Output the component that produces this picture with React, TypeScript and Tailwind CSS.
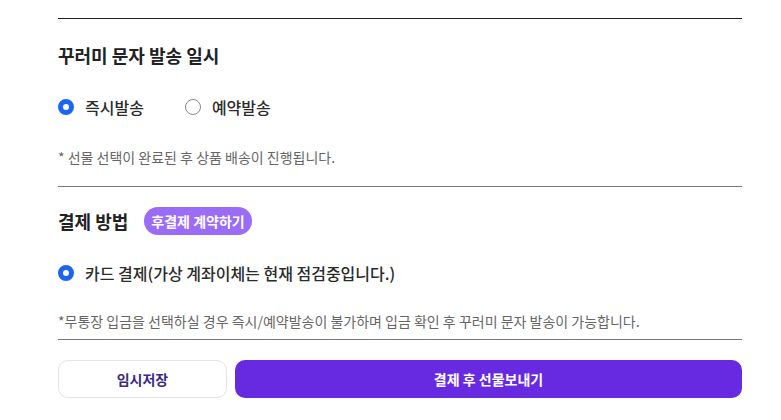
import { ReactNode } from 'react';

const FONT = { fontFamily: '"Noto Sans CJK KR", "Noto Sans", sans-serif' };

function Radio({ checked, label }: { checked?: boolean; label: string }) {
    return (
        <label className="flex items-center gap-[11px] h-6">
            {checked ? (
                <span className="w-4 h-4 rounded-full border-[5px] border-[#1c64f2] bg-white box-border" />
            ) : (
                <span className="w-4 h-4 rounded-full border border-[#8a8a8a] bg-white box-border" />
            )}
            <span className="text-[16px] font-medium text-[#2b2b2b] leading-6">{label}</span>
        </label>
    );
}

function Title({ children }: { children: ReactNode }) {
    return <h3 className="text-[18px] font-bold text-[#222] leading-6">{children}</h3>;
}

export default function App() {
    return (
        <div className="min-h-screen bg-white" style={FONT}>
            <div className="ml-[58px] w-[684px] pt-[18px] flex flex-col">
                <div className="h-px bg-[#222]" />

                {/* 발송 일시 */}
                <div className="mt-[24px]">
                    <Title>꾸러미 문자 발송 일시</Title>
                </div>
                <div className="mt-[28px] flex items-center gap-[41px]">
                    <Radio checked label="즉시발송" />
                    <Radio label="예약발송" />
                </div>
                <p className="mt-[28px] text-[14px] leading-5 text-[#666]">
                    * 선물 선택이 완료된 후 상품 배송이 진행됩니다.
                </p>
                <div className="mt-[19px] h-px bg-[#777]" />

                {/* 결제 방법 */}
                <div className="mt-[20px] flex items-center gap-4 h-7">
                    <Title>결제 방법</Title>
                    <span className="h-7 px-[7px] rounded-full bg-[#9b6cf6] text-white text-[14px] font-bold flex items-center">
                        후결제 계약하기
                    </span>
                </div>
                <div className="mt-[26px]">
                    <Radio checked label="카드 결제(가상 계좌이체는 현재 점검중입니다.)" />
                </div>
                <p className="mt-[26px] text-[14px] leading-5 text-[#666]">
                    *무통장 입금을 선택하실 경우 즉시/예약발송이 불가하며 입금 확인 후 꾸러미 문자 발송이 가능합니다.
                </p>
                <div className="mt-[8px] h-px bg-[#777]" />

                <div className="mt-[20px] flex gap-2">
                    <button className="w-[169px] h-[38px] rounded-[10px] border border-[#e4e4e4] bg-white text-[14px] font-bold text-[#3b2a85]">
                        임시저장
                    </button>
                    <button className="flex-1 h-[38px] rounded-[10px] bg-[#672ae0] text-[14px] font-bold text-white">
                        결제 후 선물보내기
                    </button>
                </div>
            </div>
        </div>
    );
}
